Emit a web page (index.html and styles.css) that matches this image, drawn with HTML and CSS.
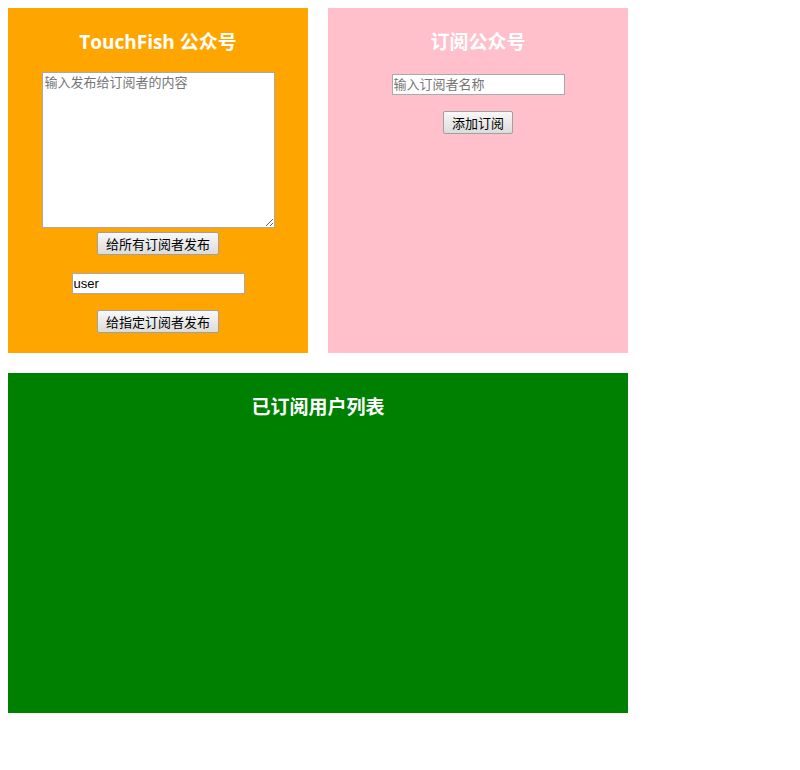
FILE: index.html
```html
<!DOCTYPE html>
<html lang="zh">
<head>
<meta charset="utf-8">
<title>TouchFish</title>
<link rel="stylesheet" href="styles.css">
</head>
<body>
<div class="top-row">
  <section class="panel panel-publisher">
    <h2 class="panel-title">TouchFish 公众号</h2>
    <textarea class="content-box" placeholder="输入发布给订阅者的内容"></textarea>
    <button class="btn btn-wide btn-first">给所有订阅者发布</button>
    <input class="text-input input-user" type="text" value="user">
    <button class="btn btn-wide btn-second">给指定订阅者发布</button>
  </section>
  <section class="panel panel-subscribe">
    <h2 class="panel-title">订阅公众号</h2>
    <input class="text-input input-name" type="text" placeholder="输入订阅者名称">
    <button class="btn btn-add">添加订阅</button>
  </section>
</div>
<section class="panel-list">
  <h2 class="panel-title">已订阅用户列表</h2>
</section>
</body>
</html>
```
FILE: styles.css
```css
body {
  margin: 8px;
  font-family: "Liberation Sans", "Noto Sans CJK SC", sans-serif;
  background: #ffffff;
}

.top-row {
  display: flex;
  gap: 20px;
}

.panel {
  width: 300px;
  height: 345px;
  box-sizing: border-box;
  padding-top: 22px;
  display: flex;
  flex-direction: column;
  align-items: center;
}

.panel-publisher {
  background: #ffa500;
}

.panel-subscribe {
  background: #ffc0cb;
}

.panel-list {
  margin-top: 20px;
  width: 620px;
  height: 340px;
  box-sizing: border-box;
  padding-top: 22px;
  background: #008000;
  display: flex;
  flex-direction: column;
  align-items: center;
}

.panel-title {
  margin: 0;
  font-family: "Open Sans", "Noto Sans CJK SC", sans-serif;
  font-size: 19px;
  line-height: 24px;
  font-weight: 700;
  color: #ffffff;
}

.content-box {
  margin-top: 18px;
  width: 233px;
  height: 156px;
  box-sizing: border-box;
  border: 1px solid #a9a9a9;
  padding: 1px 2px;
  font-family: "Noto Sans CJK SC", sans-serif;
  font-size: 13px;
  line-height: 16px;
  resize: both;
}

.content-box::placeholder {
  color: #757575;
}

.btn {
  height: 23px;
  box-sizing: border-box;
  padding: 0 6px;
  border: 1px solid #a0a0a0;
  border-radius: 2px;
  background: linear-gradient(#f8f8f8, #dcdcdc);
  font-family: "Noto Sans CJK SC", sans-serif;
  font-size: 13px;
  line-height: 19px;
  color: #000000;
}

.btn-wide {
  width: 122px;
}

.btn-first {
  margin-top: 4px;
}

.btn-second {
  margin-top: 16px;
}

.btn-add {
  width: 70px;
  margin-top: 16px;
}

.text-input {
  width: 173px;
  height: 21px;
  box-sizing: border-box;
  border: 1px solid #a9a9a9;
  padding: 0 1px;
  font-family: "Liberation Sans", "Noto Sans CJK SC", sans-serif;
  font-size: 13px;
  background: #ffffff;
  color: #000000;
}

.text-input::placeholder {
  color: #757575;
  font-family: "Noto Sans CJK SC", sans-serif;
}

.input-user {
  margin-top: 18px;
}

.input-name {
  margin-top: 20px;
}
```
